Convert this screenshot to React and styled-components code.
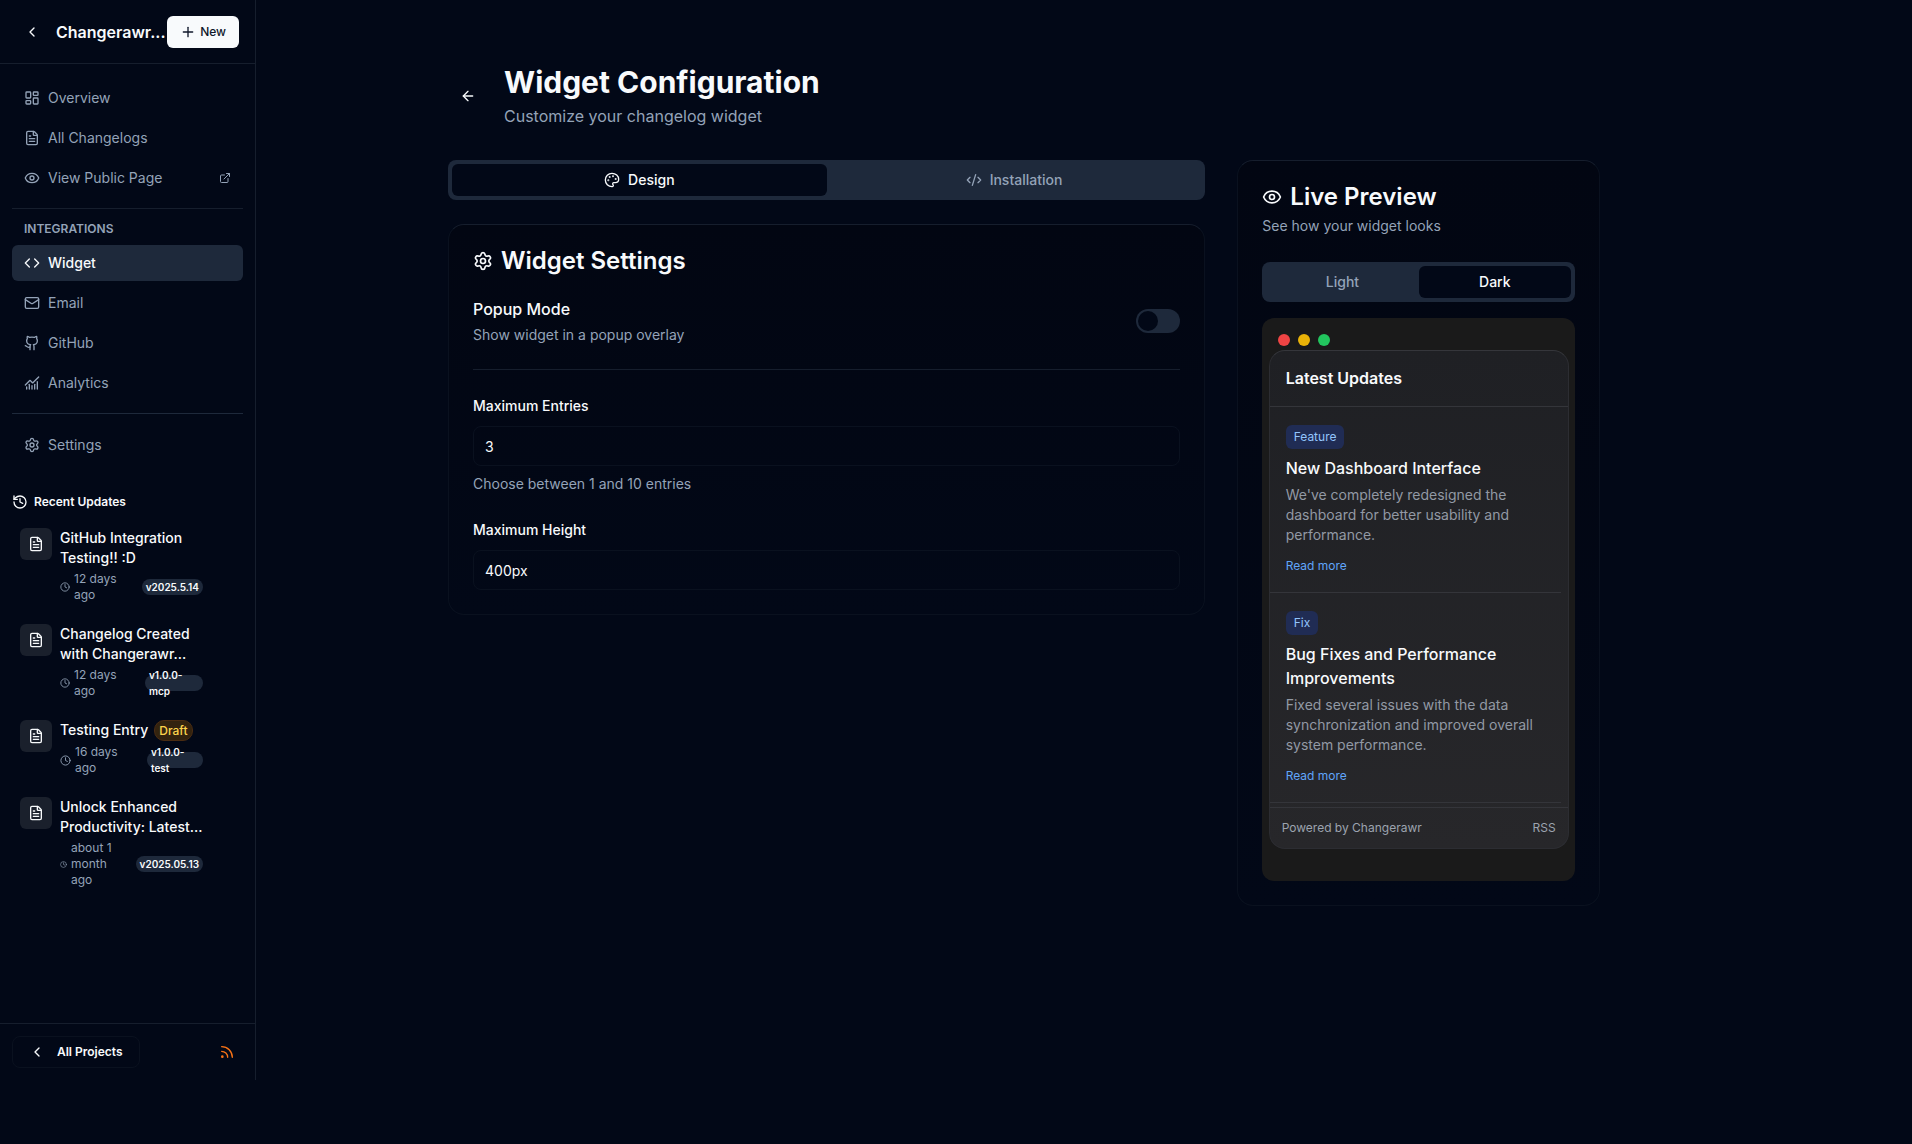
import React, { useState } from "react";
import styled, { createGlobalStyle } from "styled-components";
import {
  ArrowLeft,
  ChartNoAxesCombined,
  ChevronLeft,
  Clock,
  Code,
  CodeXml,
  ExternalLink,
  Eye,
  FileText,
  Github,
  History,
  LayoutDashboard,
  Mail,
  Palette,
  Plus,
  Rss,
  Settings,
} from "lucide-react";

const color = {
  bg: "#020817",
  text: "#f8fafc",
  soft: "#94a3b8",
  muted: "#1e293b",
  line: "#161e2d",
  faint: "#0a111f",
};

const GlobalStyle = createGlobalStyle`
  *, *::before, *::after { box-sizing: border-box; }
  body {
    margin: 0;
    background: ${color.bg};
    color: ${color.text};
    font-family: Inter, "Liberation Sans", sans-serif;
    font-size: 16px;
    line-height: 24px;
  }
  h1, h2, h3, p, ul { margin: 0; padding: 0; }
  ul { list-style: none; }
  a { color: inherit; text-decoration: none; }
  button, input { font: inherit; color: inherit; }
  button { cursor: pointer; }
  svg { display: block; }
`;

const Page = styled.div`
  display: flex;
  align-items: flex-start;
  min-height: 100vh;
`;

/* Sidebar */
const Sidebar = styled.aside`
  display: flex;
  flex-direction: column;
  flex: 0 0 256px;
  height: calc(100vh - 64px);
  border-right: 1px solid ${color.line};
`;

const SidebarHeader = styled.header`
  display: flex;
  align-items: center;
  height: 64px;
  padding: 0 16px;
  border-bottom: 1px solid ${color.line};
`;

const IconButton = styled.button`
  display: inline-flex;
  align-items: center;
  justify-content: center;
  flex: none;
  width: ${(p) => p.$size}px;
  height: ${(p) => p.$size}px;
  padding: 0;
  border: 0;
  border-radius: 6px;
  background: transparent;
  color: ${(p) => p.$color || color.text};
`;

const ProjectName = styled.h2`
  flex: 1;
  min-width: 0;
  padding-left: 8px;
  font-size: 16px;
  font-weight: 600;
  white-space: nowrap;
`;

const NewButton = styled.button`
  display: inline-flex;
  align-items: center;
  gap: 4px;
  height: 32px;
  padding: 0 13px;
  border: 0;
  border-radius: 6px;
  background: ${color.text};
  color: #0f172a;
  font-size: 12px;
  font-weight: 500;
  line-height: 16px;
`;

const SidebarBody = styled.div`
  flex: 1;
  min-height: 0;
  padding: 16px 12px;
  overflow: hidden;
`;

const NavList = styled.ul`
  display: flex;
  flex-direction: column;
  gap: 4px;
`;

const NavLink = styled.a`
  display: flex;
  align-items: center;
  gap: 8px;
  height: 36px;
  padding: 0 12px;
  border-radius: 6px;
  font-size: 14px;
  line-height: 20px;
  font-weight: ${(p) => (p.$active ? 500 : 400)};
  color: ${(p) => (p.$active ? color.text : color.soft)};
  background: ${(p) => (p.$active ? color.muted : "transparent")};

  svg:last-child {
    margin-left: auto;
  }
`;

const NavRule = styled.hr`
  height: 1px;
  margin: ${(p) => (p.$strong ? "12px 0 13px" : "12px 0")};
  border: 0;
  background: ${(p) => (p.$strong ? color.muted : color.line)};
`;

const NavHeading = styled.h3`
  padding: 0 12px 8px;
  font-size: 12px;
  font-weight: 600;
  line-height: 16px;
  color: ${color.soft};
  text-transform: uppercase;
`;

const RecentHeading = styled.h3`
  display: flex;
  align-items: center;
  gap: 6px;
  padding: 31px 0 10px;
  font-size: 12px;
  font-weight: 600;
  line-height: 16px;
`;

const RecentList = styled.ul`
  display: flex;
  flex-direction: column;
  gap: 5px;
`;

const RecentItem = styled.li`
  display: flex;
  gap: 8px;
  padding: 8px 40px 8px 8px;
`;

const FileTile = styled.span`
  display: flex;
  align-items: center;
  justify-content: center;
  flex: none;
  width: 32px;
  height: 32px;
  border-radius: 6px;
  background: #1a202c;
`;

const RecentText = styled.div`
  flex: 1;
  min-width: 0;
  display: flex;
  flex-direction: column;
  gap: 3px;
`;

const RecentTitle = styled.a`
  display: flex;
  gap: 6px;
  font-size: 14px;
  font-weight: 500;
  line-height: 20px;
`;

const DraftBadge = styled.span`
  height: 21px;
  padding: 0 4px;
  border: 1px solid #4a2c12;
  border-radius: 10px;
  background: #33230f;
  color: #fcd34d;
  font-size: 12px;
  line-height: 19px;
`;

const Meta = styled.div`
  display: flex;
  align-items: center;
  justify-content: space-between;
  gap: 8px;
`;

const Age = styled.span`
  display: flex;
  align-items: center;
  gap: 4px;
  font-size: 12px;
  line-height: 16px;
  color: ${color.soft};

  svg { flex: none; }
`;

const Version = styled.span`
  display: flex;
  align-items: center;
  flex: 0 0 ${(p) => p.$width}px;
  height: 16px;
  padding: 0 4px;
  border-radius: 8px;
  background: ${color.muted};
  font-size: 10px;
  font-weight: 600;
  line-height: 16px;
`;

const SidebarFooter = styled.footer`
  display: flex;
  align-items: center;
  justify-content: space-between;
  padding: 12px;
  border-top: 1px solid ${color.line};
`;

const ProjectsButton = styled.button`
  display: inline-flex;
  align-items: center;
  gap: 12px;
  height: 32px;
  padding: 0 16px;
  border: 1px solid ${color.faint};
  border-radius: 8px;
  background: transparent;
  font-size: 12px;
  font-weight: 600;
  line-height: 16px;
`;

/* Main area */
const Main = styled.main`
  flex: 1;
  min-width: 0;
`;

const Container = styled.div`
  max-width: 1536px;
  padding: 64px 32px;
`;

const Content = styled.div`
  max-width: 1152px;
  margin: 0 auto;
`;

const PageHeader = styled.header`
  display: flex;
  align-items: center;
  gap: 16px;
  margin-bottom: 32px;
`;

const PageTitle = styled.h1`
  margin-bottom: 4px;
  font-size: 30px;
  font-weight: 700;
  line-height: 36px;
`;

const PageLead = styled.p`
  color: ${color.soft};
`;

const Columns = styled.div`
  display: grid;
  grid-template-columns: repeat(3, minmax(0, 1fr));
  align-items: start;
  gap: 32px;
`;

const SettingsColumn = styled.div`
  grid-column: span 2;
  display: flex;
  flex-direction: column;
  gap: 24px;
`;

const TabList = styled.div`
  display: grid;
  grid-template-columns: 1fr 1fr;
  height: 40px;
  padding: 4px;
  border-radius: 8px;
  background: ${color.muted};
`;

const Tab = styled.button`
  display: inline-flex;
  align-items: center;
  justify-content: center;
  gap: 8px;
  padding: 0 12px;
  border: 0;
  border-radius: 6px;
  font-size: 14px;
  font-weight: 500;
  line-height: 20px;
  color: ${(p) => (p["aria-selected"] ? color.text : color.soft)};
  background: ${(p) => (p["aria-selected"] ? color.bg : "transparent")};
`;

const Card = styled.section`
  display: flex;
  flex-direction: column;
  gap: 24px;
  padding: 24px;
  border: 1px solid ${color.faint};
  border-top-color: ${color.line};
  border-radius: 16px;
  background: linear-gradient(#020612, ${color.bg});
`;

const CardTitle = styled.h2`
  display: flex;
  align-items: center;
  gap: 8px;
  font-size: 24px;
  font-weight: 600;
  line-height: 24px;
`;

const Hint = styled.p`
  font-size: 14px;
  line-height: 20px;
  color: ${color.soft};
`;

const CardHead = styled.div`
  display: flex;
  flex-direction: column;
  gap: 7px;
  padding-bottom: 2px;
`;

const SwitchRow = styled.div`
  display: flex;
  align-items: center;
  justify-content: space-between;
`;

const SwitchText = styled.div`
  display: flex;
  flex-direction: column;
  gap: 4px;
`;

const SwitchLabel = styled.label`
  font-weight: 500;
`;

const Switch = styled.input`
  appearance: none;
  display: flex;
  align-items: center;
  width: 44px;
  height: 24px;
  margin: 0;
  padding: 2px;
  border-radius: 12px;
  background: ${color.muted};
  cursor: pointer;

  &::before {
    content: "";
    width: 20px;
    height: 20px;
    border-radius: 50%;
    background: ${color.bg};
  }
  &:checked { justify-content: flex-end; background: ${color.text}; }
`;

const Rule = styled.hr`
  width: 100%;
  height: 1px;
  margin: 0;
  border: 0;
  background: ${color.line};
`;

const Field = styled.div`
  display: flex;
  flex-direction: column;
  gap: 8px;
`;

const FieldLabel = styled.label`
  font-size: 14px;
  font-weight: 500;
`;

const TextInput = styled.input`
  width: 100%;
  height: 40px;
  padding: 0 11px;
  border: 1px solid ${color.faint};
  border-radius: 8px;
  background: transparent;
  font-size: 14px;
  outline: none;
`;

/* Live preview */
const PreviewBody = styled.div`
  display: flex;
  flex-direction: column;
  gap: 16px;
`;

const Browser = styled.div`
  padding: 16px 0 32px;
  border-radius: 12px;
  background: #1a1a1a;
`;

const Dots = styled.div`
  display: flex;
  gap: 8px;
  padding: 0 16px 4px;
`;

const Dot = styled.span`
  width: 12px;
  height: 12px;
  border-radius: 50%;
  background: ${(p) => p.$color};
`;

const Widget = styled.article`
  max-width: 300px;
  margin: 0 auto;
  border: 1px solid #2c2d32;
  border-top-color: #35363b;
  border-radius: 16px;
  background: linear-gradient(#1f2024, #27272a);
`;

const WidgetTitle = styled.h3`
  padding: 15px 16px 16px;
  border-bottom: 1px solid #34353a;
  font-size: 16px;
  font-weight: 600;
`;

const Entries = styled.div`
  height: 400px;
  padding-right: 7px;
  overflow: hidden;
`;

const Entry = styled.div`
  display: flex;
  flex-direction: column;
  align-items: flex-start;
  padding: 18px 16px 14px;
  border-bottom: 1px solid #34353a;
`;

const Tag = styled.span`
  margin-bottom: 7px;
  padding: 4px 8px;
  border-radius: 6px;
  background: #202c54;
  color: #93c5fd;
  font-size: 12px;
  line-height: 16px;
`;

const EntryTitle = styled.h3`
  margin-bottom: 5px;
  font-size: 16px;
  font-weight: 500;
`;

const EntryText = styled.p`
  margin-bottom: 9px;
  font-size: 14px;
  line-height: 20px;
  color: #9299a4;
`;

const ReadMore = styled.a`
  font-size: 12px;
  line-height: 24px;
  color: #60a5fa;
`;

const WidgetFooter = styled.footer`
  display: flex;
  justify-content: space-between;
  padding: 12px;
  border-top: 1px solid #34353a;
  font-size: 12px;
  line-height: 16px;
  color: #9ca3af;
`;

const mainLinks = [
  { label: "Overview", icon: LayoutDashboard },
  { label: "All Changelogs", icon: FileText },
  { label: "View Public Page", icon: Eye, external: true },
];

const integrationLinks = [
  { label: "Widget", icon: Code, active: true },
  { label: "Email", icon: Mail },
  { label: "GitHub", icon: Github },
  { label: "Analytics", icon: ChartNoAxesCombined },
];

const recent = [
  { title: "GitHub Integration Testing!! :D", age: "12 days ago", version: "v2025.5.14", width: 61, clock: 10 },
  { title: "Changelog Created with Changerawr...", age: "12 days ago", version: "v1.0.0-mcp", width: 58, clock: 10 },
  { title: "Testing Entry", draft: true, age: "16 days ago", version: "v1.0.0-test", width: 56, clock: 11 },
  { title: "Unlock Enhanced Productivity: Latest...", age: "about 1 month ago", version: "v2025.05.13", width: 67, clock: 7 },
];

const entries = [
  {
    tag: "Feature",
    title: "New Dashboard Interface",
    text: "We've completely redesigned the dashboard for better usability and performance.",
  },
  {
    tag: "Fix",
    title: "Bug Fixes and Performance Improvements",
    text: "Fixed several issues with the data synchronization and improved overall system performance.",
  },
];

function Nav({ links }) {
  return (
    <NavList>
      {links.map(({ label, icon: Icon, active, external }) => (
        <li key={label}>
          <NavLink href="#" $active={active}>
            <span><Icon size={16} /></span>
            {label}
            {external && <ExternalLink size={12} />}
          </NavLink>
        </li>
      ))}
    </NavList>
  );
}

function ProjectSidebar() {
  return (
    <Sidebar>
      <SidebarHeader>
        <IconButton $size={32} aria-label="Back"><ChevronLeft size={16} /></IconButton>
        <ProjectName>Changerawr...</ProjectName>
        <NewButton><Plus size={16} />New</NewButton>
      </SidebarHeader>
      <SidebarBody>
        <nav>
          <Nav links={mainLinks} />
          <NavRule />
          <NavHeading>Integrations</NavHeading>
          <Nav links={integrationLinks} />
          <NavRule $strong />
          <Nav links={[{ label: "Settings", icon: Settings }]} />
        </nav>
        <RecentHeading><History size={16} />Recent Updates</RecentHeading>
        <RecentList>
          {recent.map((r) => (
            <RecentItem key={r.title}>
              <FileTile><FileText size={16} /></FileTile>
              <RecentText>
                <RecentTitle href="#">
                  {r.title}
                  {r.draft && <DraftBadge>Draft</DraftBadge>}
                </RecentTitle>
                <Meta>
                  <Age><Clock size={r.clock} />{r.age}</Age>
                  <Version $width={r.width}>{r.version}</Version>
                </Meta>
              </RecentText>
            </RecentItem>
          ))}
        </RecentList>
      </SidebarBody>
      <SidebarFooter>
        <ProjectsButton><ChevronLeft size={16} />All Projects</ProjectsButton>
        <IconButton $size={32} $color="#f97316" aria-label="RSS feed"><Rss size={16} /></IconButton>
      </SidebarFooter>
    </Sidebar>
  );
}

function WidgetSettings() {
  return (
    <Card>
      <CardTitle><Settings size={20} />Widget Settings</CardTitle>
      <SwitchRow>
        <SwitchText>
          <SwitchLabel htmlFor="popup">Popup Mode</SwitchLabel>
          <Hint>Show widget in a popup overlay</Hint>
        </SwitchText>
        <Switch id="popup" type="checkbox" role="switch" />
      </SwitchRow>
      <Rule />
      <Field>
        <FieldLabel htmlFor="max-entries">Maximum Entries</FieldLabel>
        <TextInput id="max-entries" inputMode="numeric" defaultValue="3" />
        <Hint>Choose between 1 and 10 entries</Hint>
      </Field>
      <Field>
        <FieldLabel htmlFor="max-height">Maximum Height</FieldLabel>
        <TextInput id="max-height" defaultValue="400px" />
      </Field>
    </Card>
  );
}

function LivePreview() {
  const [theme, setTheme] = useState("Dark");
  return (
    <Card>
      <CardHead>
        <CardTitle><Eye size={20} />Live Preview</CardTitle>
        <Hint>See how your widget looks</Hint>
      </CardHead>
      <PreviewBody>
        <TabList role="tablist">
          {["Light", "Dark"].map((t) => (
            <Tab key={t} role="tab" aria-selected={theme === t} onClick={() => setTheme(t)}>{t}</Tab>
          ))}
        </TabList>
        <Browser>
          <Dots>
            <Dot $color="#ef4444" />
            <Dot $color="#eab308" />
            <Dot $color="#22c55e" />
          </Dots>
          <Widget>
            <WidgetTitle>Latest Updates</WidgetTitle>
            <Entries>
              {entries.map((e) => (
                <Entry key={e.title}>
                  <Tag>{e.tag}</Tag>
                  <EntryTitle>{e.title}</EntryTitle>
                  <EntryText>{e.text}</EntryText>
                  <ReadMore href="#">Read more</ReadMore>
                </Entry>
              ))}
            </Entries>
            <WidgetFooter>
              <span>Powered by Changerawr</span>
              <a href="#">RSS</a>
            </WidgetFooter>
          </Widget>
        </Browser>
      </PreviewBody>
    </Card>
  );
}

export default function App() {
  const [tab, setTab] = useState("design");
  return (
    <>
      <GlobalStyle />
      <Page>
        <ProjectSidebar />
        <Main>
          <Container>
            <Content>
              <PageHeader>
                <IconButton $size={40} aria-label="Go back"><ArrowLeft size={16} /></IconButton>
                <div>
                  <PageTitle>Widget Configuration</PageTitle>
                  <PageLead>Customize your changelog widget</PageLead>
                </div>
              </PageHeader>
              <Columns>
                <SettingsColumn>
                  <TabList role="tablist">
                    <Tab role="tab" aria-selected={tab === "design"} onClick={() => setTab("design")}>
                      <Palette size={16} />Design
                    </Tab>
                    <Tab role="tab" aria-selected={tab === "install"} onClick={() => setTab("install")}>
                      <CodeXml size={16} />Installation
                    </Tab>
                  </TabList>
                  <WidgetSettings />
                </SettingsColumn>
                <LivePreview />
              </Columns>
            </Content>
          </Container>
        </Main>
      </Page>
    </>
  );
}
